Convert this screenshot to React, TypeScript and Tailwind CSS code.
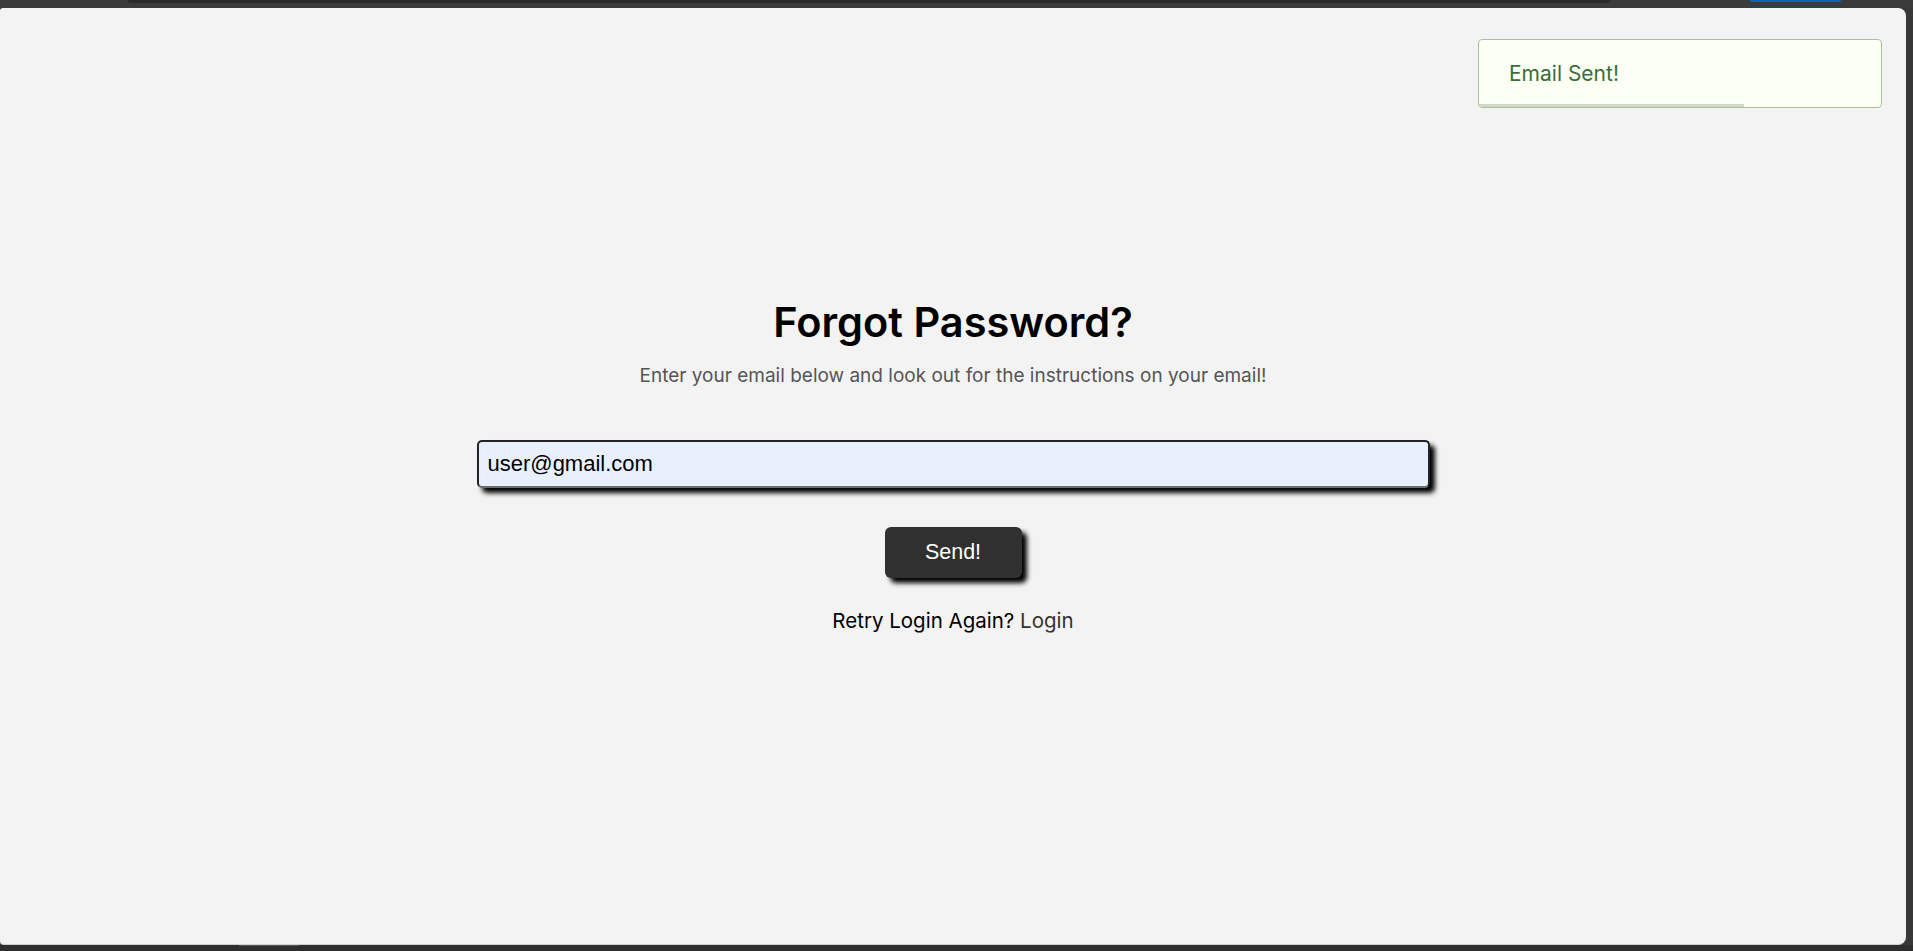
import React, { useState } from 'react';

const sans = "font-['Inter','Noto_Sans',sans-serif]";
const arial = "font-['Liberation_Sans',Arial,sans-serif]";

const ForgotPassword: React.FC = () => {
  const [email, setEmail] = useState('user@gmail.com');

  return (
    <div className="relative flex-1 flex flex-col items-center pt-[290px] mr-[7px] bg-[#f3f3f3] rounded-tl-[3px] rounded-tr-[8px] rounded-br-[8px] rounded-bl-[4px] border-b border-[#cfcfcf]">
      {/* toast */}
      <div className="absolute top-[31px] right-[24px] w-[404px] h-[69px] flex items-center pl-[30px] bg-[#fbfff4] border border-[#a3c496] rounded-[4px] overflow-hidden">
        <span className={`${sans} text-[21px] text-[#3b6e37]`}>Email Sent!</span>
        <div className="absolute left-0 bottom-0 h-[3px] w-[265px] bg-[#d3d8cb]" />
      </div>

      <h1 className={`${sans} text-[41.5px] leading-[48px] font-semibold text-black`}>Forgot Password?</h1>
      <p className={`${sans} mt-[18px] text-[19px] leading-[24px] text-[#555]`}>
        Enter your email below and look out for the instructions on your email!
      </p>

      <form className="w-1/2 flex flex-col items-center mt-[52px]" onSubmit={e => e.preventDefault()}>
        <input
          type="email"
          value={email}
          onChange={e => setEmail(e.target.value)}
          className={`${arial} w-full h-[48px] px-[9px] text-[22px] text-black bg-[#e8f0fe] border-2 border-[#222] border-b-[#6e6e6e] rounded-[5px] shadow-[5px_5px_5px_#000] outline-none`}
        />
        <button
          type="submit"
          className={`${arial} mt-[39px] w-[137px] h-[51px] text-[21.5px] text-white bg-[#303030] rounded-[6px] shadow-[5px_5px_5px_#000]`}
        >
          Send!
        </button>
      </form>

      <p className={`${sans} mt-[31px] text-[20.5px] leading-[24px] text-black`}>
        Retry Login Again? <a className="text-[#333] cursor-pointer">Login</a>
      </p>
    </div>
  );
};

export default function App() {
  return (
    <div className="h-screen flex flex-col bg-[#383838] overflow-hidden">
      {/* window top strip */}
      <div className="h-[8px] flex shrink-0 bg-[#3b3b3b]">
        <div className="w-[128px]" />
        <div className="w-[1482px] h-[3px] bg-[#2b2b2b] rounded-b-[6px]" />
        <div className="w-[140px]" />
        <div className="w-[91px] h-[2px] bg-[#0b63c4] rounded-b-[2px]" />
      </div>

      <ForgotPassword />

      {/* window bottom strip */}
      <div className="h-[6px] flex shrink-0 bg-[#2e2e2e]">
        <div className="w-[239px]" />
        <div className="w-[60px] h-[1px] bg-[#5a5a5a]" />
      </div>
    </div>
  );
}
